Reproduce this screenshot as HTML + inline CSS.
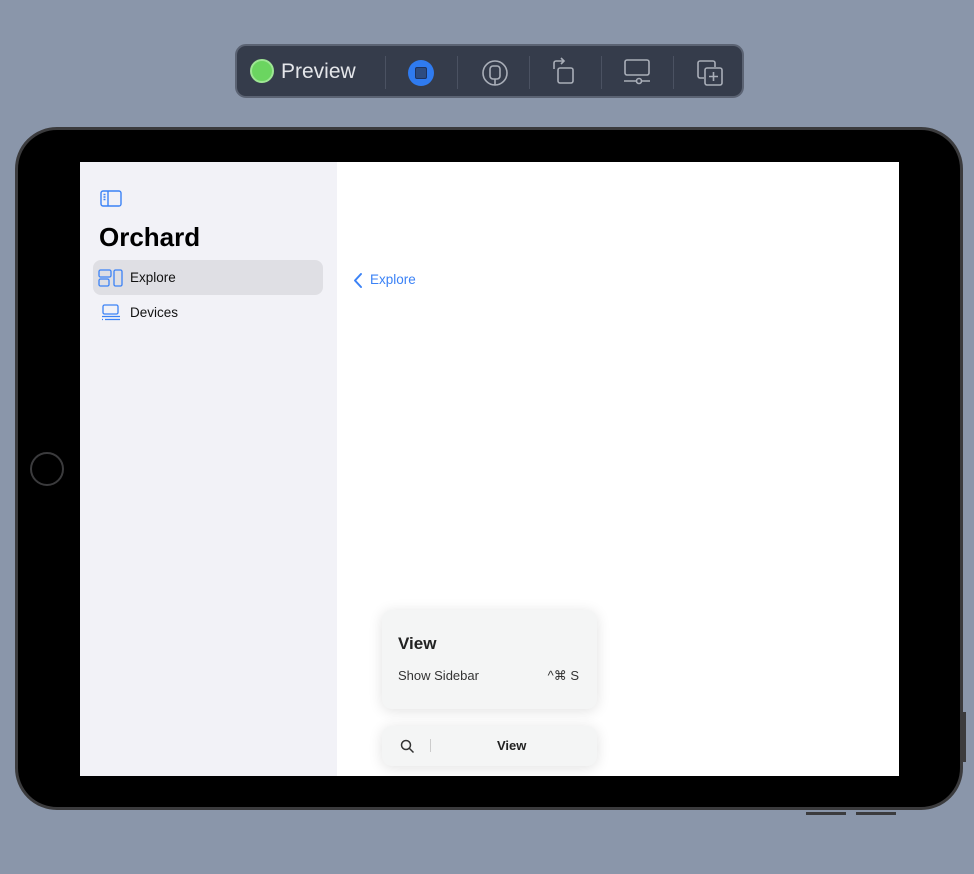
<!DOCTYPE html>
<html><head><style>
*{margin:0;padding:0;box-sizing:border-box}
body{width:974px;height:874px;background:#8a96aa;position:relative;overflow:hidden;font-family:"Liberation Sans",sans-serif}
.tb{position:absolute;left:235px;top:44px;width:509px;height:54px;background:#353c4b;border:2px solid #5b6373;border-radius:11px}
.sep{position:absolute;top:10px;width:1px;height:33px;background:#4b5262}
.dev{position:absolute;left:15px;top:127px;width:948px;height:683px;background:#000;border:3px solid #3b3b3d;border-radius:42px}
.scr{position:absolute;left:80px;top:162px;width:819px;height:614px;background:#fff;overflow:hidden}
.side{position:absolute;left:0;top:0;width:257px;height:614px;background:#f2f2f7}
.card{position:absolute;background:#f4f5f5;border-radius:10px;box-shadow:0 2px 14px rgba(0,0,0,.12)}
</style></head><body>
<div class="tb">
 <div style="position:absolute;left:13px;top:13px;width:24px;height:24px;border-radius:50%;background:#6bd560;border:2px solid #9ee694"></div>
 <div style="position:absolute;left:44px;top:14px;color:#e4e6ea;font-size:21px">Preview</div>
 <div class="sep" style="left:148px"></div>
 <div style="position:absolute;left:171px;top:14px;width:26px;height:26px;border-radius:50%;background:#2f7bf0"></div>
 <div style="position:absolute;left:178px;top:21px;width:12px;height:12px;border-radius:2px;background:#2e4c80;border:1px solid #1d3360"></div>
 <div class="sep" style="left:220px"></div>
 <svg style="position:absolute;left:244px;top:13px" width="28" height="28" viewBox="0 0 28 28" fill="none" stroke="#a9aeb8" stroke-width="1.6"><circle cx="14" cy="14" r="12"/><rect x="9" y="7" width="10" height="13" rx="3"/><path d="M14 20v6"/></svg>
 <div class="sep" style="left:292px"></div>
 <svg style="position:absolute;left:314px;top:11px" width="28" height="30" viewBox="0 0 28 30" fill="none" stroke="#a9aeb8" stroke-width="1.6"><rect x="7" y="11" width="15" height="15" rx="2"/><path d="M3 12V6a2 2 0 012-2h7"/><path d="M10 1l3 3-3 3"/></svg>
 <div class="sep" style="left:364px"></div>
 <svg style="position:absolute;left:386px;top:12px" width="28" height="28" viewBox="0 0 28 28" fill="none" stroke="#a9aeb8" stroke-width="1.6"><rect x="2" y="2" width="24" height="15" rx="2"/><path d="M1 23h26"/><circle cx="16" cy="23" r="2.5" fill="#353c4b"/></svg>
 <div class="sep" style="left:436px"></div>
 <svg style="position:absolute;left:459px;top:13px" width="28" height="28" viewBox="0 0 28 28" fill="none" stroke="#a9aeb8" stroke-width="1.6"><path d="M8 19H4a2 2 0 01-2-2V4a2 2 0 012-2h13a2 2 0 012 2v4"/><rect x="9" y="9" width="17" height="17" rx="2"/><path d="M17.5 13v9M13 17.5h9"/></svg>
</div>
<div style="position:absolute;left:962px;top:712px;width:4px;height:50px;background:#3b3b3d"></div>
<div style="position:absolute;left:806px;top:812px;width:40px;height:3px;background:#3b3b3d"></div>
<div style="position:absolute;left:856px;top:812px;width:40px;height:3px;background:#3b3b3d"></div>
<div class="dev"></div>
<div style="position:absolute;left:30px;top:452px;width:34px;height:34px;border-radius:50%;border:2px solid #3b3b3d"></div>
<div class="scr">
 <div class="side">
  <svg style="position:absolute;left:20px;top:28px" width="22" height="17" viewBox="0 0 22 17" fill="none" stroke="#3b82f6" stroke-width="1.4"><rect x="1" y="1" width="20" height="15" rx="2"/><path d="M8 1v15M3.5 4.5h2M3.5 7h2M3.5 9.5h2"/></svg>
  <div style="position:absolute;left:19px;top:60px;font-size:26px;font-weight:bold;color:#000">Orchard</div>
  <div style="position:absolute;left:13px;top:98px;width:230px;height:35px;background:#dfdfe4;border-radius:8px"></div>
  <svg style="position:absolute;left:18px;top:107px" width="25" height="18" viewBox="0 0 25 18" fill="none" stroke="#3b82f6" stroke-width="1.3"><rect x="1" y="1" width="12" height="7" rx="1.5"/><rect x="1" y="10" width="10" height="7" rx="1.5"/><rect x="16" y="1" width="8" height="16" rx="1.5"/></svg>
  <div style="position:absolute;left:50px;top:108px;font-size:13.5px;color:#111">Explore</div>
  <svg style="position:absolute;left:21px;top:142px" width="20" height="18" viewBox="0 0 20 18" fill="none" stroke="#3b82f6" stroke-width="1.3"><rect x="2" y="1" width="15" height="9" rx="1.5"/><path d="M1 12.5h18M4 15.5h15M1 15.5h1"/></svg>
  <div style="position:absolute;left:50px;top:143px;font-size:13.5px;color:#111">Devices</div>
 </div>
 <svg style="position:absolute;left:272px;top:110px" width="12" height="17" viewBox="0 0 12 17" fill="none" stroke="#3b82f6" stroke-width="2" stroke-linecap="round" stroke-linejoin="round"><path d="M9 2L3 8.5 9 15"/></svg>
 <div style="position:absolute;left:290px;top:110px;font-size:13.5px;color:#3b82f6">Explore</div>
 <div class="card" style="left:302px;top:448px;width:215px;height:99px">
  <div style="position:absolute;left:16px;top:24px;font-size:17px;font-weight:bold;color:#222">View</div>
  <div style="position:absolute;left:16px;top:58px;font-size:13px;color:#333">Show Sidebar</div>
  <div style="position:absolute;right:18px;top:58px;font-size:13px;color:#333">^⌘ S</div>
 </div>
 <div class="card" style="left:302px;top:564px;width:215px;height:40px">
  <svg style="position:absolute;left:18px;top:13px" width="15" height="15" viewBox="0 0 15 15" fill="none" stroke="#333" stroke-width="1.5"><circle cx="6" cy="6" r="4.5"/><path d="M9.5 9.5l4 4"/></svg>
  <div style="position:absolute;left:48px;top:13px;width:1px;height:13px;background:#ccc"></div>
  <div style="position:absolute;left:115px;top:12px;font-size:13px;font-weight:bold;color:#222">View</div>
 </div>
</div>
</body></html>
